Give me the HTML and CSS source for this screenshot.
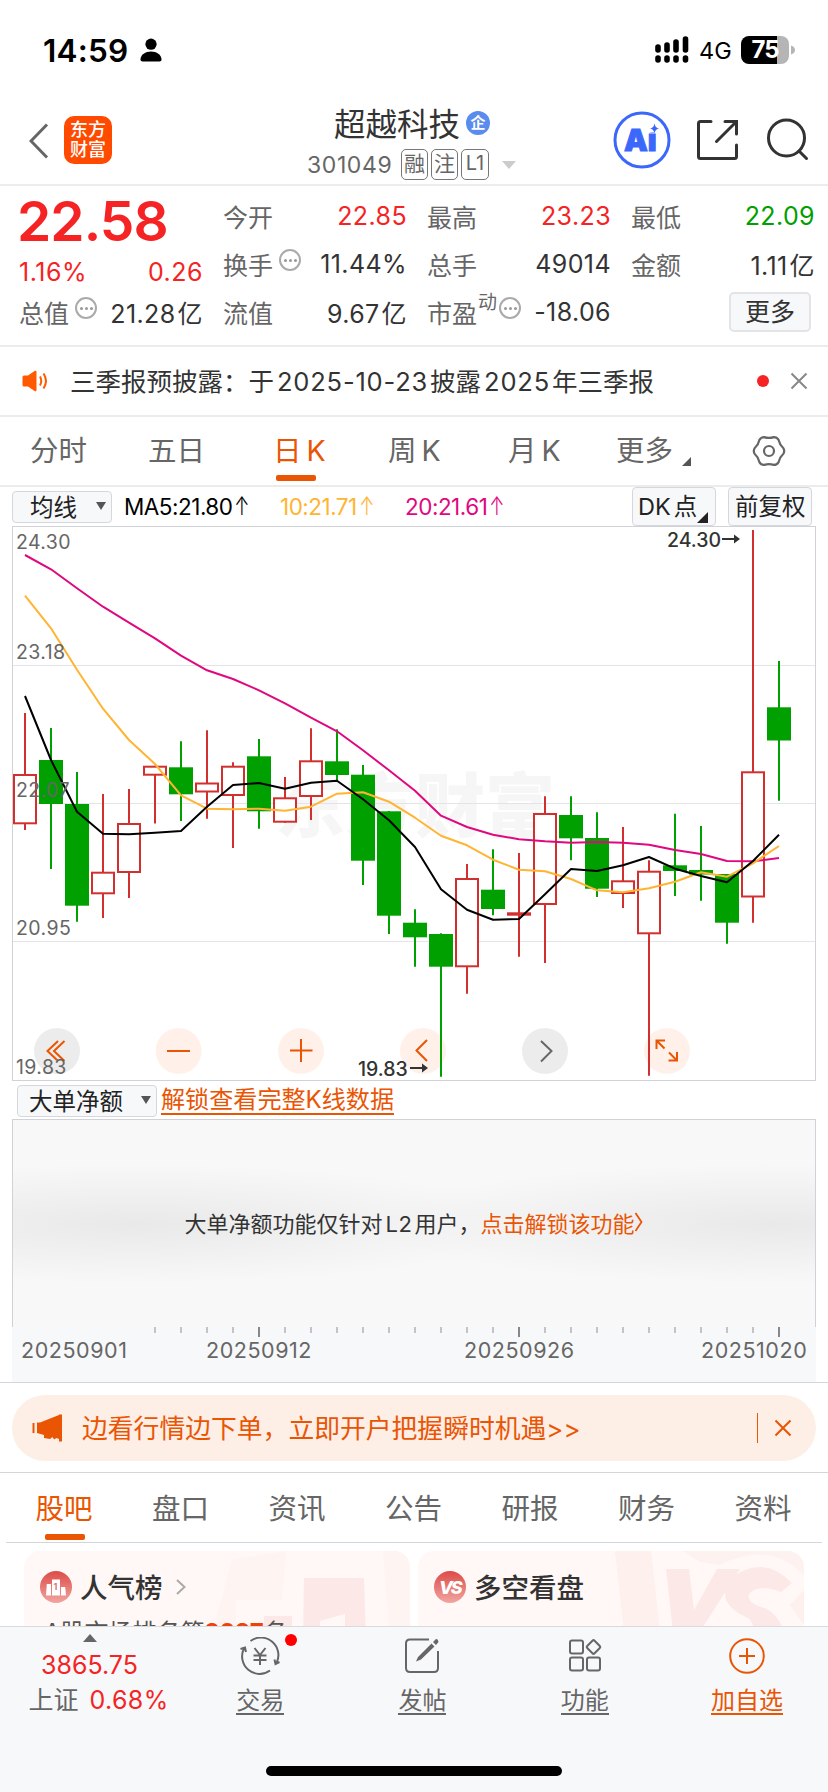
FILE: index.html
```html
<!DOCTYPE html>
<html lang="zh-CN">
<head>
  <meta charset="UTF-8">
  <meta name="viewport" content="width=device-width, initial-scale=1.0">
  <title>超越科技 301049</title>
  <link rel="stylesheet" href="styles.css">
</head>
<body>
  <!-- 状态栏 -->
  <div class="status-bar">
    <span class="clock">14:59</span>
    <svg class="person" width="22" height="24" viewBox="0 0 22 24"><circle cx="11" cy="6.2" r="5.6"/><path d="M0.5 21.5C0.5 16.5 5.5 13.5 11 13.5S21.5 16.5 21.5 21.5C21.5 23 20.5 23.4 19.5 23.4H2.5C1.5 23.4 0.5 23 0.5 21.5Z"/></svg>
    <svg class="signal" width="34" height="28" viewBox="0 0 34 28"><path d="M3 11v3M12 9v5M21 6v8M30.5 3v11M3 22v2M12 22v2M21 22v2M30.5 22v2" stroke="#000" stroke-width="5.6" stroke-linecap="round"/></svg>
    <span class="network">4G</span>
    <span class="battery">75</span>
    <svg width="5" height="10" viewBox="0 0 5 10"><path d="M0 0.5C2.6 1 4 3 4 5S2.6 9 0 9.5Z" fill="#b5b5b5"/></svg>
  </div>

  <!-- 顶部导航 -->
  <div class="header">
    <div class="header-left">
      <svg width="20" height="36" viewBox="0 0 20 36"><path d="M18 1.5L2 18L18 34.5" fill="none" stroke="#666" stroke-width="3"/></svg>
      <div class="logo">东方<br>财富</div>
    </div>
    <div class="header-title">
      <div class="stock-name">超越科技<span class="badge">企</span></div>
      <div class="stock-code"><span class="code">301049</span><span class="tag">融</span><span class="tag">注</span><span class="tag tag-l">L1</span><i class="caret"></i></div>
    </div>
    <div class="header-right">
      <svg width="58" height="58" viewBox="0 0 58 58">
        <circle cx="29" cy="29" r="27" fill="none" stroke="#3b68fb" stroke-width="3"/>
        <text class="ai-text" x="11" y="40">Ai</text>
        <path d="M35 11h12v10.500h-12z" fill="#fff"/>
        <path d="M41.500 12.500Q42.300 17 46 17.500Q42.300 18 41.500 22.500Q40.700 18 37 17.500Q40.700 17 41.500 12.500Z" fill="#3b68fb"/>
      </svg>
      <svg class="share" width="42" height="42" viewBox="0 0 42 42"><path d="M14 2.500H3.500Q1.500 2.500 1.500 4.500V37.500Q1.500 39.500 3.500 39.500H37.500Q39.500 39.500 39.500 37.500V26M28 2.500H39.500V15M39 3L19.500 22.500" fill="none" stroke="#333" stroke-width="3" stroke-linecap="round"/></svg>
      <svg class="search" width="44" height="44" viewBox="0 0 44 44"><circle cx="20.500" cy="20" r="18" fill="none" stroke="#333" stroke-width="3"/><path d="M33 33L40.500 40.500" stroke="#333" stroke-width="3" stroke-linecap="round"/></svg>
    </div>
  </div>

  <!-- 行情 -->
  <div class="quote">
    <div class="quote-main">
      <div class="price">22.58</div>
      <div class="change"><span>1.16%</span><span>0.26</span></div>
      <div class="cell"><label>总值<i class="info"></i></label><b>21.28<em>亿</em></b></div>
    </div>
    <div class="quote-col">
      <div class="cell"><label>今开</label><b class="red">22.85</b></div>
      <div class="cell"><label>换手<i class="info"></i></label><b>11.44%</b></div>
      <div class="cell"><label>流值</label><b>9.67<em>亿</em></b></div>
    </div>
    <div class="quote-col">
      <div class="cell"><label>最高</label><b class="red">23.23</b></div>
      <div class="cell"><label>总手</label><b>49014</b></div>
      <div class="cell"><label>市盈<sup>动</sup><i class="info info-tight"></i></label><b>-18.06</b></div>
    </div>
    <div class="quote-col">
      <div class="cell"><label>最低</label><b class="green">22.09</b></div>
      <div class="cell"><label>金额</label><b>1.11<em>亿</em></b></div>
      <div class="cell cell-more"><button class="more-btn">更多</button></div>
    </div>
  </div>

  <!-- 公告 -->
  <div class="notice">
    <svg width="26" height="22" viewBox="0 0 26 22"><path d="M0.500 7Q0.500 5.500 2 5.500H6L13 0.800Q14.500 0.200 14.500 1.800V20.200Q14.500 21.800 13 21.200L6 16.500H2Q0.500 16.500 0.500 15Z" fill="#ff5a00"/><path d="M18 6.500Q20.500 11 18 15.500M21.500 3.500Q26.500 11 21.500 18.500" fill="none" stroke="#ff5a00" stroke-width="2"/></svg>
    <span class="notice-text">三季报预披露：于<i>2025-10-23</i>披露<i>2025</i>年三季报</span>
    <i class="dot"></i>
    <svg width="18" height="18" viewBox="0 0 18 18"><path d="M1.500 1.500L16.500 16.500M16.500 1.500L1.500 16.500" stroke="#888" stroke-width="2"/></svg>
  </div>

  <!-- K线周期 -->
  <div class="period-tabs">
    <span>分时</span>
    <span>五日</span>
    <span class="active">日<i>K</i></span>
    <span>周<i>K</i></span>
    <span>月<i>K</i></span>
    <span class="period-more">更多<i class="corner"></i></span>
    <svg width="34" height="32" viewBox="-17 -16 34 32"><g fill="none" stroke="#666" stroke-width="2.200"><path d="M14.400 2.800Q10.700 6.200 9.600 11.100Q8 13.900 4.800 13.900Q0 12.300 -4.800 13.900Q-8 13.900 -9.600 11.100Q-10.700 6.200 -14.400 2.800Q-16 0 -14.400 -2.800Q-10.700 -6.200 -9.600 -11.100Q-8 -13.900 -4.800 -13.900Q0 -12.300 4.800 -13.900Q8 -13.900 9.600 -11.100Q10.700 -6.200 14.400 -2.800Q16 0 14.400 2.800Z"/><circle r="5"/></g></svg>
  </div>

  <!-- 均线 -->
  <div class="ma-bar">
    <div class="select">均线<i class="down"></i></div>
    <span class="ma5">MA5:21.80<i>↑</i></span>
    <span class="ma10">10:21.71<i>↑</i></span>
    <span class="ma20">20:21.61<i>↑</i></span>
    <div class="tool dk"><i>DK</i>点<u class="corner"></u></div>
    <div class="tool">前复权</div>
  </div>

  <!-- K线图 -->
  <svg class="kline" viewBox="12 526 805 556" width="805" height="556">
    <text class="watermark" x="275" y="832">东方财富</text>
    <g class="grid"><path d="M12 665.500H816M12 803.500H816M12 941.500H816"/></g>
    <g class="ctrl">
      <circle class="gray" cx="57" cy="1051" r="23"/>
      <circle cx="178.600" cy="1051" r="23"/>
      <circle cx="301" cy="1051" r="23"/>
      <circle cx="423" cy="1051" r="23"/>
      <circle class="gray" cx="545" cy="1051" r="23"/>
      <circle cx="667" cy="1051" r="23"/>
      <path d="M58 1041L47.500 1051L58 1061M64.500 1041L54 1051L64.500 1061"/>
      <path d="M167 1051H190M290 1050.500H312.500M301 1039V1062"/>
      <path d="M427 1040L416.500 1050.500L427 1061"/>
      <path class="dark" d="M541 1041L551.500 1051L541 1061.500"/>
      <path d="M656.500 1049V1040.500H665M657 1041L664.500 1048.500M677 1052V1060.500H668.500M676.500 1060L669 1052.500"/>
    </g>
    <g id="candles"></g>
    <g id="lines"></g>
    <g class="scale">
      <text x="16" y="549">24.30</text>
      <text x="16" y="659">23.18</text>
      <text x="16" y="797">22.07</text>
      <text x="16" y="935">20.95</text>
      <text x="16" y="1074">19.83</text>
    </g>
    <g class="mark">
      <text x="667" y="546.500">24.30</text>
      <path d="M722 539H735"/><path class="head" d="M734 534.500L740 539L734 543.500Z"/>
      <text x="358" y="1075.500">19.83</text>
      <path d="M410 1068H423"/><path class="head" d="M422 1063.500L428 1068L422 1072.500Z"/>
    </g>
    <rect class="frame" x="12.500" y="526.500" width="803" height="554"/>
  </svg>

  <!-- 副图 -->
  <div class="sub-bar">
    <div class="select select-sub">大单净额<i class="down"></i></div>
    <a class="unlock">解锁查看完整K线数据</a>
  </div>
  <div class="sub-panel">
    <span>大单净额功能仅针对<i>L2</i>用户，</span><a>点击解锁该功能</a>
    <svg width="9" height="20" viewBox="0 0 9 20"><path d="M1.500 1L7.500 10L1.500 19" fill="none" stroke="#ea5504" stroke-width="1.800"/></svg>
  </div>
  <svg class="axis" viewBox="12 1327 804 55" width="804" height="55">
    <g id="ticks"></g>
    <text x="21" y="1358">20250901</text>
    <text x="206" y="1358">20250912</text>
    <text x="464" y="1358">20250926</text>
    <text x="701" y="1358">20251020</text>
  </svg>

  <!-- 开户横幅 -->
  <div class="banner-wrap">
    <div class="banner">
      <svg width="32" height="28" viewBox="0 0 32 28"><path d="M1.500 9V19" stroke="#ea5504" stroke-width="2"/><path d="M5 8.500H8L27 1V0.500H30V27.500H27V25L24.500 24L22 25.500L20.500 23L18 25L12 24V21L5 19Z" fill="#ea5504"/></svg>
      <span class="banner-text">边看行情边下单，立即开户把握瞬时机遇&gt;&gt;</span>
      <i class="divider"></i>
      <svg width="18" height="18" viewBox="0 0 18 18"><path d="M1.500 1.500L16.500 16.500M16.500 1.500L1.500 16.500" stroke="#ea5504" stroke-width="2"/></svg>
    </div>
  </div>

  <div class="info-tabs">
    <span class="active">股吧</span>
    <span>盘口</span>
    <span>资讯</span>
    <span>公告</span>
    <span>研报</span>
    <span>财务</span>
    <span>资料</span>
  </div>

  <div class="cards">
    <div class="card">
      <svg class="card-bg" width="386" height="90" viewBox="24 1551 386 90"><g fill="#fdf1ee"><path d="M232 1560L286 1551L282 1600H236V1641H210Z" opacity=".6"/><path d="M383 1551H410V1641H390Z" opacity=".5"/></g><g fill="#fce9e7"><path d="M304 1578H364L366 1641H345V1614L320 1621V1641H303ZM264 1616H292V1641H264Z"/></g></svg>
      <div class="card-title">
        <svg width="32" height="32" viewBox="0 0 32 32"><defs><linearGradient id="ball" x1="0" y1="0" x2="0" y2="1"><stop offset="0" stop-color="#dc4b48"/><stop offset="1" stop-color="#f2a5a0"/></linearGradient></defs><circle cx="16" cy="16" r="16" fill="url(#ball)"/><path d="M6 24.500L6.800 13H11V24.500ZM12 24.500V8.500H20V24.500ZM21 24.500V16H25.200L26 24.500Z" fill="#fff"/><text class="rank-num" x="13.400" y="19">1</text></svg>
        <span>人气榜</span>
        <svg width="10" height="16" viewBox="0 0 10 16"><path d="M1 1L8.500 8L1 15" fill="none" stroke="#aaa" stroke-width="2"/></svg>
      </div>
      <div class="card-desc">A股市场排名第<b>2037</b>名</div>
    </div>
    <div class="card">
      <svg class="card-bg" width="386" height="90" viewBox="418 1551 386 90"><g fill="#fdf0ed"><path d="M615 1551H651L661 1641H625Z"/><path d="M683 1551H804V1575Q770 1540 720 1565L700 1562Z" opacity=".8"/><path d="M804 1590L790 1605L804 1625Z"/></g><g fill="#fce9e7"><path d="M666 1569H689L694 1610L717 1569H740L694 1641H674Z"/><path d="M792 1583Q770 1560 745 1570Q720 1580 726 1600Q731 1611 748 1618Q756 1624 752 1641H784Q784 1618 765 1608Q746 1603 749 1594Q758 1583 781 1592Z"/></g></svg>
      <div class="card-title">
        <svg width="32" height="32" viewBox="0 0 32 32"><circle cx="16" cy="16" r="16" fill="url(#ball)"/><text class="vs-text" x="5" y="23">VS</text></svg>
        <span>多空看盘</span>
      </div>
    </div>
  </div>

  <!-- 底部栏 -->
  <div class="bottom-bar">
    <div class="index">
      <i class="up"></i>
      <div class="index-value">3865.75</div>
      <div class="index-name">上证<span>0.68%</span></div>
    </div>
    <div class="action">
      <div class="trade-icon">
        <svg width="42" height="38" viewBox="0 0 42 38"><g fill="none" stroke="#666" stroke-width="2"><path d="M11.500 4A17.500 17.500 0 0 1 37.500 26M31 33.500A17.500 17.500 0 0 1 5 11.500M1.500 12L6 10.500L7 15M40.500 25L36.500 27L35.500 22.500"/><path d="M15.500 11L21 18L26.500 11M21 18V28M14.500 18.500H27.500M14.500 23H27.500"/></g></svg>
        <i class="dot"></i>
      </div>
      <span>交易</span>
    </div>
    <div class="action">
      <svg width="38" height="38" viewBox="0 0 38 38"><path d="M26 2.500H7Q3 2.500 3 6.500V31Q3 35 7 35H31Q35 35 35 31V14" fill="none" stroke="#666" stroke-width="2"/><path d="M13 24.500L15 20L28.500 6.500L31.500 9.500L18 22.500ZM30 5L33 2Q35 1.500 35.500 5L33 8Z" fill="#666"/></svg>
      <span>发帖</span>
    </div>
    <div class="action">
      <svg width="38" height="38" viewBox="0 0 38 38"><g fill="none" stroke="#666" stroke-width="2"><rect x="4" y="3.500" width="13" height="13" rx="2"/><rect x="4" y="20.500" width="13" height="13" rx="2"/><rect x="21" y="20.500" width="13" height="13" rx="2"/><rect x="-5.200" y="-5.200" width="10.400" height="10.400" rx="1.500" transform="translate(27.500 10) rotate(45)"/></g></svg>
      <span>功能</span>
    </div>
    <div class="action active">
      <svg width="38" height="38" viewBox="0 0 38 38"><circle cx="19" cy="19" r="16.800" fill="none" stroke="#ea5504" stroke-width="2"/><path d="M11 19H27M19 11V27" stroke="#ea5504" stroke-width="2"/></svg>
      <span>加自选</span>
    </div>
  </div>
  <div class="home-indicator"></div>

  <script src="chart.js"></script>
</body>
</html>
```
FILE: styles.css
```css
/* 基本样式 */
* {
  box-sizing: border-box;
}

body {
  display: flex;
  flex-direction: column;
  width: 828px;
  height: 1792px;
  margin: 0;
  overflow: hidden;
  background: #fff;
  color: #333;
  font-family: Inter, "Noto Sans CJK SC", sans-serif;
  white-space: nowrap;
}

svg {
  display: block;
  flex: none;
}

i,
em {
  font-style: normal;
}

/* 状态栏 */
.status-bar {
  display: flex;
  align-items: center;
  height: 100px;
  padding-left: 43px;
  color: #000;
}

.clock {
  width: 97px;
  font-size: 31.500px;
  font-weight: 600;
  letter-spacing: 0.200px;
}

.person {
  margin-right: 493px;
}

.network {
  width: 52px;
  padding-left: 10px;
  font-size: 23.500px;
}

.battery {
  width: 48px;
  height: 28px;
  margin-right: 2px;
  border-radius: 8px;
  background: linear-gradient(90deg, #000 75%, #b5b5b5 75%);
  color: #fff;
  font-size: 24px;
  font-weight: 700;
  line-height: 28px;
  text-align: center;
  letter-spacing: -1px;
}

/* 顶部导航 */
.header {
  display: grid;
  grid-template-columns: 260px 300px 1fr;
  height: 86px;
  border-bottom: 2px solid #ececec;
}

.header-left {
  display: flex;
  gap: 15px;
  padding: 16px 0 0 29px;
}

.header-left svg {
  margin-top: 7px;
}

.logo {
  width: 48px;
  height: 48px;
  padding-top: 4px;
  border-radius: 10px;
  background: #ff4a00;
  color: #fff;
  font-size: 18px;
  font-weight: 500;
  line-height: 20px;
  text-align: center;
}

.stock-name {
  display: flex;
  align-items: center;
  height: 46px;
  padding: 0 0 3px 74px;
  font-size: 31.500px;
}

.badge {
  width: 24px;
  height: 24px;
  margin: 2px 0 0 6px;
  border-radius: 50%;
  background: #5a8bee;
  color: #fff;
  font-size: 15px;
  font-weight: 700;
  line-height: 23px;
  text-align: center;
}

.stock-code {
  display: flex;
  align-items: center;
  gap: 3px;
  height: 37px;
  padding-left: 47px;
  color: #666;
  font-size: 23px;
}

.code {
  width: 91px;
  letter-spacing: 0.600px;
}

.tag {
  width: 27px;
  height: 31px;
  border: 1.500px solid #777;
  border-radius: 5px;
  font-size: 21px;
  line-height: 27px;
  text-align: center;
}

.tag-l {
  width: 28px;
  font-size: 20px;
}

.caret {
  margin-left: 10px;
  border: 7px solid transparent;
  border-top: 8px solid #ccc;
  border-bottom: 0;
}

.header-right {
  display: flex;
  padding: 11px 0 0 53px;
}

.share {
  margin: 8px 0 0 26px;
}

.search {
  margin: 7px 0 0 27px;
}

.ai-text {
  fill: #3b68fb;
  stroke: #3b68fb;
  stroke-width: 1px;
  font-size: 30px;
  font-weight: 900;
}

/* 行情 */
.quote {
  display: grid;
  grid-template-columns: repeat(4, 184px);
  gap: 20px;
  height: 161px;
  padding: 6px 0 0 19px;
  border-bottom: 2px solid #ececec;
}

.price {
  height: 57px;
  margin-left: -2px;
  color: #f52323;
  font-size: 55px;
  font-weight: 600;
  letter-spacing: -0.900px;
  line-height: 58px;
}

.change {
  display: flex;
  justify-content: space-between;
  height: 39px;
  color: #f52323;
  font-size: 25px;
  letter-spacing: 0.500px;
  line-height: 46px;
}

.cell {
  display: flex;
  justify-content: space-between;
  align-items: center;
  height: 48px;
}

.cell label {
  display: flex;
  align-items: center;
  color: #666;
  font-size: 25px;
}

.cell b {
  font-size: 25px;
  font-weight: 400;
  letter-spacing: 0.400px;
}

.cell em {
  margin-left: 2px;
}

.cell .red {
  color: #f52323;
}

.cell .green {
  color: #00a000;
}

.info {
  display: flex;
  justify-content: center;
  align-items: center;
  width: 22px;
  height: 22px;
  margin: -8px 0 0 6px;
  border: 2px solid #aaa;
  border-radius: 50%;
}

.info::before {
  content: "";
  width: 3px;
  height: 3px;
  border-radius: 50%;
  background: #999;
  box-shadow: -5px 0 #999, 5px 0 #999;
}

.info-tight {
  margin-left: 2px;
}

.cell sup {
  margin-top: -18px;
  margin-left: 1px;
  font-size: 19px;
  line-height: 20px;
}

.cell-more {
  justify-content: flex-end;
  padding-right: 4px;
}

.more-btn {
  width: 82px;
  height: 40px;
  padding: 0;
  border: 2px solid #e2e4e8;
  border-radius: 5px;
  background: #f7f8fa;
  color: #333;
  font-family: inherit;
  font-size: 25px;
  line-height: 34px;
}

/* 公告 */
.notice {
  display: flex;
  align-items: center;
  height: 70px;
  padding: 0 20px 1px 22px;
  border-bottom: 2px solid #ececec;
}

.notice-text {
  flex: 1;
  padding: 0 0 3px 22px;
  font-size: 25.500px;
}

.notice-text i {
  margin: 0 2px 0 3px;
  letter-spacing: 0.800px;
}

.dot {
  width: 12px;
  height: 12px;
  border-radius: 50%;
  background: #f52323;
}

.notice .dot {
  margin-right: 21px;
}

/* K线周期 */
.period-tabs {
  display: grid;
  grid-template-columns: 118px 125px 115px 120px 108px 136px 34px;
  align-items: center;
  height: 70px;
  padding-left: 30px;
  border-bottom: 2px solid #ececec;
  color: #666;
  font-size: 28.500px;
}

.period-tabs span {
  display: flex;
  height: 68px;
  line-height: 68px;
}

.period-tabs span i:not(.corner) {
  margin-left: 5px;
}

.period-tabs .active {
  position: relative;
  color: #ea5504;
}

.period-tabs .active::after,
.info-tabs .active::after {
  content: "";
  position: absolute;
  left: 3px;
  bottom: 4px;
  width: 40px;
  height: 6px;
  border-radius: 2px;
  background: #ea5504;
}

.corner {
  width: 0;
  height: 0;
  border-left: 9px solid transparent;
  border-bottom: 9px solid #555;
}

.period-more .corner {
  margin: 40px 0 0 9px;
}

/* 均线 */
.ma-bar {
  display: flex;
  align-items: center;
  height: 39px;
  padding: 0 16px 0 12px;
  font-size: 22.500px;
}

.select {
  display: flex;
  justify-content: space-between;
  align-items: center;
  width: 100px;
  height: 32px;
  margin-right: 12px;
  padding: 0 5px 2px 17px;
  border: 1px solid #d5d7dc;
  border-radius: 4px;
  background: #f7f8fa;
  color: #222;
  font-size: 23.500px;
}

.down {
  border: 5px solid transparent;
  border-top: 8px solid #555;
  border-bottom: 0;
}

.ma5 {
  width: 156px;
  color: #000;
}

.ma10 {
  width: 125px;
  color: #ffb432;
}

.ma20 {
  flex: 1;
  color: #e0087f;
}

.ma5,
.ma10,
.ma20 {
  letter-spacing: -0.500px;
}

.ma-bar span i {
  display: inline-block;
  margin-left: -1px;
  font-size: 26px;
  font-weight: 300;
  line-height: 26px;
  transform: scaleX(0.700);
}

.tool {
  width: 84px;
  height: 39px;
  padding-left: 6px;
  border: 1px solid #d5d7dc;
  border-radius: 4px;
  background: #f7f8fa;
  color: #222;
  font-size: 23.500px;
  line-height: 37px;
}

.dk {
  display: flex;
  margin-right: 12px;
  padding-left: 5px;
}

.dk i {
  margin-right: 3px;
}

.dk .corner {
  margin-top: 24px;
  border-left-width: 11px;
  border-bottom: 11px solid #222;
}

/* K线图 */
.kline {
  margin-left: 12px;
}

.watermark {
  fill: #f6f6f6;
  font-size: 70px;
  font-weight: 900;
}

.grid path {
  stroke: #e3e3e8;
}

.frame {
  fill: none;
  stroke: #d0d2d7;
}

.ctrl circle {
  fill: #fff1ea;
}

.ctrl .gray {
  fill: #ececec;
}

.ctrl path {
  fill: none;
  stroke: #ea5504;
  stroke-width: 2;
}

.ctrl .dark {
  stroke: #666;
}

.wick-up,
.body-up {
  fill: #fff;
  stroke: #d22f2f;
  stroke-width: 2;
}

.wick-down {
  stroke: #00a000;
  stroke-width: 2;
}

.body-down {
  fill: #00a000;
}

.line {
  fill: none;
  stroke-width: 2;
  stroke-linejoin: round;
}

.scale text {
  fill: #666;
  font-size: 19.500px;
  letter-spacing: 0.400px;
}

.mark text {
  fill: #333;
  font-size: 19.500px;
  font-weight: 500;
}

.mark path {
  stroke: #333;
  stroke-width: 2;
}

.mark .head {
  fill: #333;
  stroke: none;
}

/* 副图 */
.sub-bar {
  display: flex;
  align-items: center;
  height: 37px;
  padding-left: 17px;
}

.select-sub {
  width: 140px;
  margin-right: 4px;
  padding: 0 5px 1px 11px;
}

.unlock {
  margin-top: 1px;
  border-bottom: 2px solid #ea5504;
  color: #ea5504;
  font-size: 24.100px;
  line-height: 26px;
}

.sub-panel {
  display: flex;
  justify-content: center;
  align-items: center;
  width: 804px;
  height: 208px;
  margin-left: 12px;
  padding-bottom: 3px;
  border: 1px solid #d0d2d7;
  border-bottom: 0;
  background:
    radial-gradient(ellipse 400px 60px at 120px 104px, #e9e9e9, rgba(247, 247, 247, 0)),
    radial-gradient(ellipse 400px 60px at 760px 104px, #e9e9e9, rgba(247, 247, 247, 0)),
    #f8f8f8;
  font-size: 22px;
}

.sub-panel i {
  margin: 0 2px 0 3px;
  letter-spacing: 0.500px;
}

.sub-panel a {
  color: #ea5504;
}

.axis {
  margin-left: 12px;
  background: #f7f8fa;
}

.axis text {
  fill: #666;
  font-size: 21.500px;
  letter-spacing: 0.550px;
}

.tick {
  stroke: #c4c4c8;
  stroke-width: 2;
}

.tick-long {
  stroke: #88888c;
}

/* 开户横幅 */
.banner-wrap {
  height: 91px;
  padding: 12px 12px 0;
  border-top: 1px solid #d3d5da;
  border-bottom: 1px solid #d3d5da;
}

.banner {
  display: flex;
  align-items: center;
  height: 66px;
  padding: 0 24px 0 20px;
  border-radius: 33px;
  background: #fdeee6;
  color: #ea5504;
}

.banner-text {
  flex: 1;
  padding: 0 0 3px 18px;
  font-size: 25.800px;
}

.divider {
  width: 1px;
  height: 30px;
  margin-right: 16px;
  background: #ea5504;
}

/* 资讯标签 */
.info-tabs {
  display: grid;
  grid-template-columns: repeat(7, 116.500px);
  height: 70px;
  margin: 0 6px;
  border-bottom: 1px solid #d3d5da;
  color: #666;
  font-size: 28.500px;
  line-height: 71px;
}

.info-tabs span {
  width: 57px;
  margin-left: 29.500px;
  text-align: center;
}

.info-tabs .active {
  position: relative;
  color: #ea5504;
}

.info-tabs .active::after {
  left: 9px;
}

.cards {
  display: grid;
  grid-template-columns: 386px 386px;
  gap: 8px;
  height: 83px;
  padding: 8px 24px 0;
  overflow: hidden;
}

.card {
  display: grid;
  height: 120px;
  border-radius: 16px;
  overflow: hidden;
  background: #fff8f6;
  align-content: start;
}

.card-bg {
  grid-area: 1 / 1 / 3 / 2;
}

.card-title {
  grid-area: 1 / 1;
  display: flex;
  align-items: center;
  height: 70px;
  padding: 2px 0 0 16px;
  font-size: 27.500px;
  font-weight: 500;
  gap: 9px;
}

.card-title span {
  margin: -3px 0 0 -1px;
}

.card-title svg:last-child {
  margin-left: 4px;
}

.card-desc {
  grid-area: 2 / 1;
  margin-top: -3px;
  padding-left: 20px;
  color: #555;
  font-size: 24px;
  line-height: 30px;
}

.card-desc b {
  color: #f0410a;
  font-weight: 700;
  letter-spacing: -0.500px;
}

.rank-num {
  fill: #e37370;
  font-size: 9px;
  font-weight: 700;
}

.vs-text {
  fill: #fff;
  font-size: 18px;
  font-style: italic;
  font-weight: 800;
  letter-spacing: -2px;
}

/* 底部栏 */
.bottom-bar {
  display: grid;
  grid-template-columns: 179px repeat(4, 162.300px);
  height: 140px;
  border-top: 1px solid #d8dade;
  background: #f7f8fa;
}

.index {
  display: flex;
  flex-direction: column;
  align-items: center;
  color: #f52323;
}

.up {
  margin-top: 7px;
  border: 7px solid transparent;
  border-top: 0;
  border-bottom: 8px solid #666;
}

.index-value {
  height: 43px;
  font-size: 25px;
  line-height: 47px;
}

.index-name {
  margin-left: 18px;
  color: #666;
  font-size: 25px;
  line-height: 30px;
}

.index-name span {
  margin-left: 11px;
  color: #f52323;
  letter-spacing: 0.400px;
}

.action {
  display: flex;
  flex-direction: column;
  align-items: center;
  padding-top: 10px;
  color: #666;
  font-size: 24px;
}

.action span {
  margin-top: 14px;
  border-bottom: 2px solid #666;
  line-height: 24px;
}

.action.active span {
  border-color: #ea5504;
  color: #ea5504;
}

.trade-icon {
  position: relative;
}

.trade-icon .dot {
  position: absolute;
  top: -3px;
  right: -16px;
  background: #f00;
}

.home-indicator {
  height: 26px;
  background: #f7f8fa;
}

.home-indicator::before {
  content: "";
  display: block;
  width: 296px;
  height: 10px;
  margin: 0 auto;
  border-radius: 5px;
  background: #000;
}
```
FILE: chart.js
```js
// K线数据: [涨跌, 最高, 实体上沿, 实体下沿, 最低]
const candles = [
  [1, 713, 774, 824.3, 830],
  [0, 728, 760, 804, 869],
  [0, 772, 804, 905.7, 921.7],
  [1, 794, 871.7, 894.3, 918],
  [1, 789, 823, 873, 898],
  [1, 765.7, 765.7, 775.7, 823.5],
  [0, 741.3, 767.3, 794.3, 821],
  [1, 730.3, 782.5, 792.5, 818.7],
  [1, 762.3, 765.7, 796, 848],
  [0, 739, 756.3, 811.3, 828.7],
  [1, 777, 797.3, 822.7, 822.7],
  [1, 728.3, 760.3, 797, 820],
  [0, 729.3, 761.3, 775, 781],
  [0, 765, 774.7, 860.7, 885],
  [0, 811, 811.3, 915.7, 934],
  [0, 909.3, 922.7, 937.3, 966.7],
  [0, 933.3, 934, 966.7, 1076.7],
  [1, 864, 878, 967.3, 993.7],
  [0, 849.3, 889.7, 909, 915.3],
  [1, 853, 912.3, 915.7, 956.7],
  [1, 796.3, 813, 905, 963],
  [0, 796.3, 815, 838.3, 860.3],
  [0, 812.3, 838, 888.7, 897],
  [1, 827, 880.3, 894, 908],
  [1, 860.3, 870.7, 934.3, 1075.7],
  [0, 813.7, 865.3, 871, 896],
  [0, 826, 870, 874.5, 900.7],
  [0, 874, 874, 922.7, 943.7],
  [1, 530, 771.3, 897.5, 922.7],
  [0, 661, 707.3, 740.5, 800.7]
];

// 均线
const lines = {
  "#e0087f": [555, 569.3, 588.3, 606.7, 622.7, 638.3, 655.7, 670.3, 679, 690.3, 703.3, 717.7, 731.3, 750.3, 770.3, 790.7, 815.7, 827, 834.7, 839.3, 841.3, 842.7, 842, 842.7, 844.7, 850, 854, 861, 861.3, 858],
  "#ffb432": [595.7, 628.3, 669.7, 708.7, 740, 764, 795.3, 808.7, 809.3, 808.7, 810.7, 806.7, 793.7, 792.3, 801.7, 817.7, 835.7, 845.3, 859.7, 869.7, 871.3, 879, 890.3, 892.3, 888.3, 881.7, 872.3, 876.7, 863.3, 846],
  "#000": [696, 760, 811.7, 833.7, 834.3, 832.7, 831, 806.7, 785, 783, 788.7, 782.7, 780.7, 799.3, 820.3, 847, 889.3, 909.7, 919.7, 919, 894.3, 869, 871, 865.3, 857, 868.7, 876, 882.3, 861, 834.7]
};

const step = 26;
const left = 25;

let html = "";
candles.forEach(([up, high, top, bottom, low], i) => {
  const x = left + i * step;
  const type = up ? "up" : "down";
  html += `<path class="wick-${type}" d="M${x} ${high}V${low}"/>`;
  if (up) {
    html += `<rect class="body-up" x="${x - 11}" y="${top + 1}" width="22" height="${Math.max(bottom - top - 2, 1)}"/>`;
  } else {
    html += `<rect class="body-down" x="${x - 12}" y="${top}" width="24" height="${bottom - top}"/>`;
  }
});
document.getElementById("candles").innerHTML = html;

html = "";
for (const color in lines) {
  const points = lines[color].map((y, i) => `${left + i * step},${y}`).join(" ");
  html += `<polyline class="line" stroke="${color}" points="${points}"/>`;
}
document.getElementById("lines").innerHTML = html;

// 时间轴刻度
html = "";
for (let i = 5; i < 30; i++) {
  const long = i === 9 || i === 19 || i === 29;
  html += `<path class="tick${long ? " tick-long" : ""}" d="M${left + i * step} 1327v${long ? 10 : 6}"/>`;
}
document.getElementById("ticks").innerHTML = html;
```
